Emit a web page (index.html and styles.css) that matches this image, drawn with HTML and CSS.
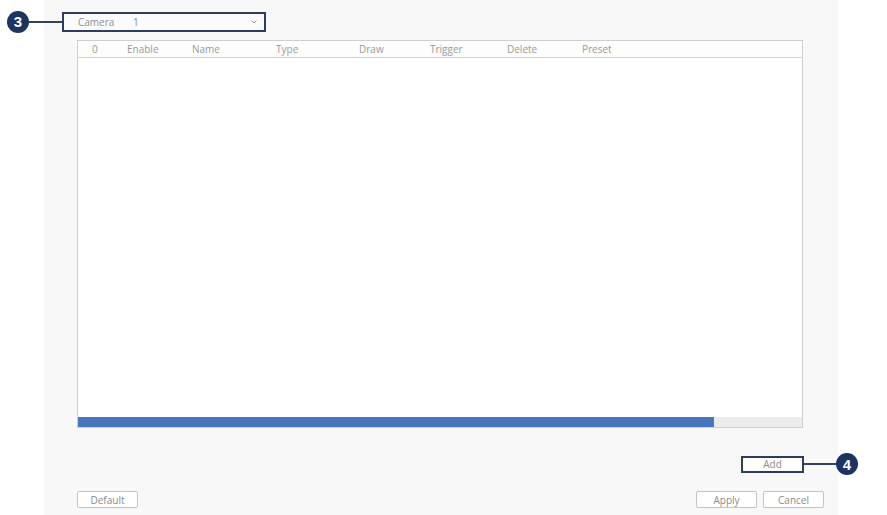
FILE: index.html
```html
<!DOCTYPE html>
<html>
<head>
<meta charset="utf-8">
<link rel="stylesheet" href="styles.css">
</head>
<body>
<div class="panel">
  <div class="top-row">
    <span class="badge">3</span>
    <span class="leader short"></span>
    <div class="cam-box">
      <span class="cam-label">Camera</span>
      <span class="cam-value">1</span>
      <svg class="chev" width="8" height="6" viewBox="0 0 8 6"><path d="M1.5 1.5 L4 4 L6.5 1.5" fill="none" stroke="#9a9a9a" stroke-width="1"/></svg>
    </div>
  </div>
  <div class="table">
    <div class="thead">
      <span class="c c0">0</span>
      <span class="c c1">Enable</span>
      <span class="c c2">Name</span>
      <span class="c c3">Type</span>
      <span class="c c4">Draw</span>
      <span class="c c5">Trigger</span>
      <span class="c c6">Delete</span>
      <span class="c c7">Preset</span>
    </div>
    <div class="tbody"></div>
    <div class="scroll"><div class="thumb"></div></div>
  </div>
  <div class="add-row">
    <button class="btn add">Add</button>
    <span class="leader long"></span>
    <span class="badge">4</span>
  </div>
  <div class="bottom-row">
    <button class="btn">Default</button>
    <div class="right-btns">
      <button class="btn">Apply</button>
      <button class="btn">Cancel</button>
    </div>
  </div>
</div>
</body>
</html>
```
FILE: styles.css
```css
html, body {
  margin: 0;
  padding: 0;
  background: #ffffff;
  width: 887px;
  height: 515px;
  overflow: hidden;
  font-family: "Open Sans", "Noto Sans", sans-serif;
}
.panel {
  margin-left: 44px;
  width: 794px;
  height: 515px;
  background: #f8f8f8;
  box-sizing: border-box;
  padding-top: 11px;
  display: flex;
  flex-direction: column;
}
.top-row {
  display: flex;
  align-items: center;
  margin-left: -37px;
  height: 21px;
}
.badge {
  width: 22px;
  height: 22px;
  border-radius: 50%;
  background: #1d3461;
  color: #fff;
  font-family: "Liberation Sans", Arial, sans-serif;
  font-weight: bold;
  font-size: 15px;
  display: flex;
  align-items: center;
  justify-content: center;
  flex: none;
}
.leader {
  height: 2px;
  background: #33415e;
  flex: none;
}
.leader.short { width: 33px; }
.leader.long { width: 32px; }
.cam-box {
  width: 204px;
  height: 20px;
  box-sizing: border-box;
  border: 2px solid #2d3d60;
  background: #fbfbfb;
  display: flex;
  align-items: center;
  padding-left: 14px;
  padding-right: 6px;
  font-size: 10px;
  color: #8d8d8d;
}
.cam-label { width: 55px; }
.cam-value { flex: 1; }
.chev { flex: none; }
.table {
  margin-left: 33px;
  margin-top: 8px;
  width: 726px;
  height: 388px;
  box-sizing: border-box;
  border: 1px solid #cfcfcf;
  background: #ffffff;
  display: flex;
  flex-direction: column;
}
.thead {
  height: 17px;
  border-bottom: 1px solid #cfcfcf;
  background: #fdfdfb;
  display: flex;
  align-items: center;
  font-size: 10px;
  color: #9a9a9a;
  flex: none;
  padding-bottom: 1px;
  box-sizing: border-box;
}
.c { flex: none; }
.c0 { margin-left: 14px; width: 35px; }
.c1 { width: 65px; }
.c2 { width: 84px; }
.c3 { width: 83px; }
.c4 { width: 71px; }
.c5 { width: 77px; }
.c6 { width: 75px; }
.tbody { flex: 1; }
.scroll {
  height: 10px;
  background: #ececec;
  flex: none;
  display: flex;
}
.thumb {
  width: 636px;
  background: #4a76bd;
}
.add-row {
  margin-top: 25px;
  display: flex;
  align-items: center;
  padding-left: 697px;
  height: 22px;
}
.btn {
  font-family: "Open Sans", "Noto Sans", sans-serif;
  font-size: 10px;
  color: #8a8a8a;
  background: #ffffff;
  border: 1px solid #c4c4c4;
  border-radius: 2px;
  height: 17px;
  width: 61px;
  padding: 0;
  box-sizing: border-box;
  line-height: 1;
}
.btn.add {
  width: 63px;
  height: 17px;
  border: 2px solid #2d3d60;
  border-radius: 0;
  flex: none;
}
.bottom-row {
  margin-top: 16px;
  margin-left: 33px;
  width: 747px;
  display: flex;
  justify-content: space-between;
}
.right-btns {
  display: flex;
  gap: 6px;
}
```
